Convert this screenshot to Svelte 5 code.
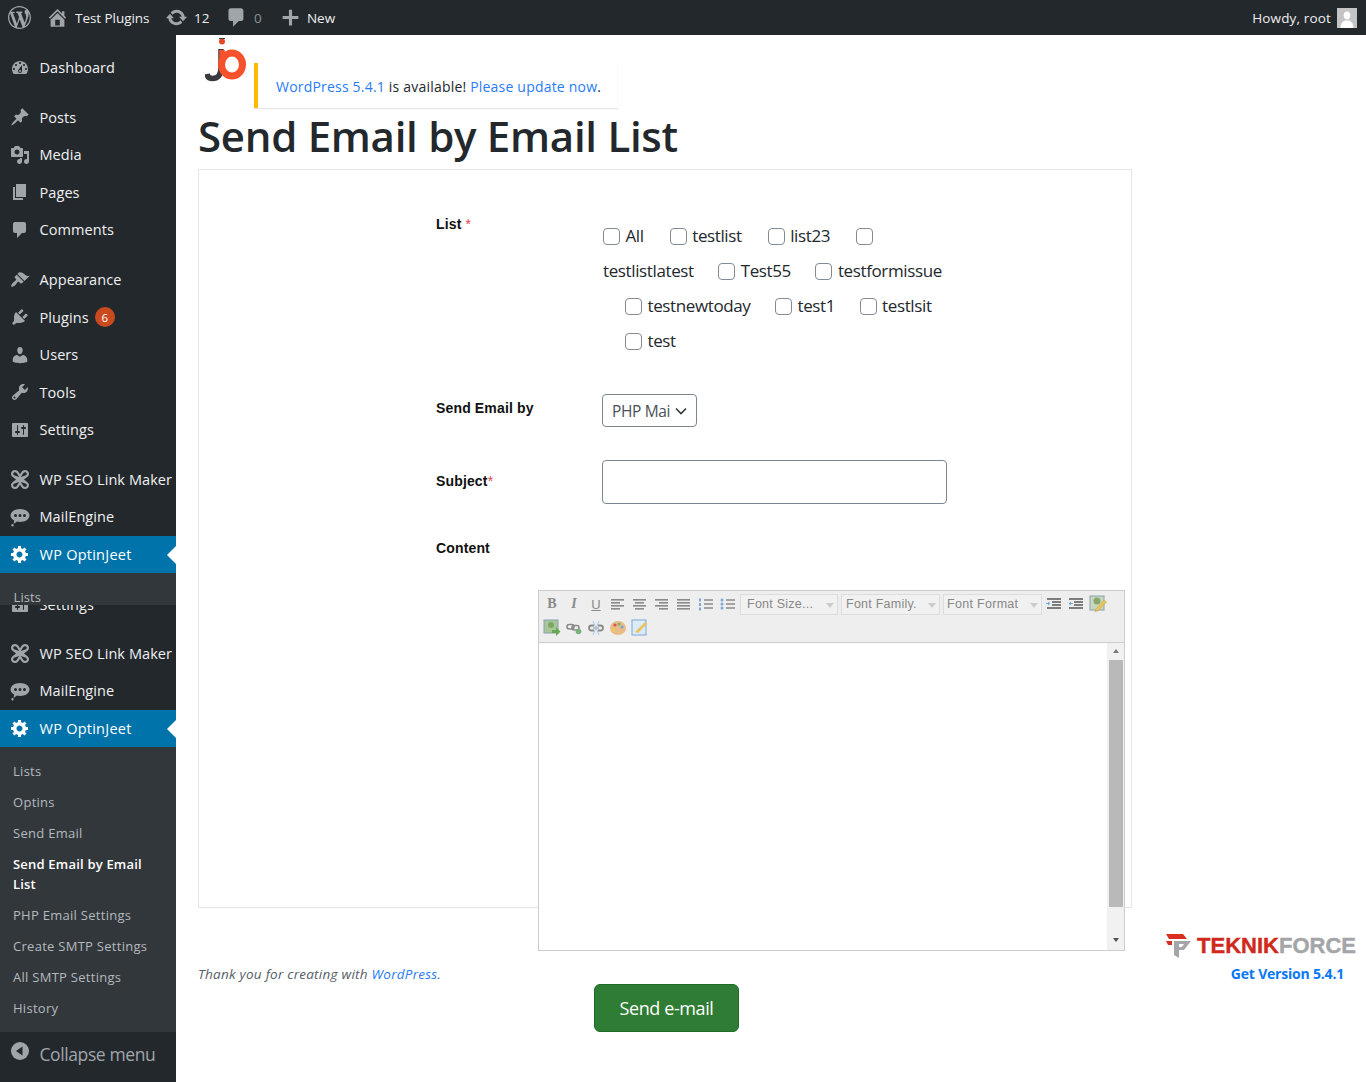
<script>
  const P = {
    dash: 'M3.76 16h12.48c1.1-1.37 1.76-3.11 1.76-5 0-4.42-3.58-8-8-8s-8 3.58-8 8c0 1.89.66 3.63 1.76 5zM10 4c.55 0 1 .45 1 1s-.45 1-1 1-1-.45-1-1 .45-1 1-1zM6 6c.55 0 1 .45 1 1s-.45 1-1 1-1-.45-1-1 .45-1 1-1zm8 0c.55 0 1 .45 1 1s-.45 1-1 1-1-.45-1-1 .45-1 1-1zm-5.37 5.55L12 7v6c0 1.1-.9 2-2 2s-2-.9-2-2c0-.57.24-1.08.63-1.45zM4 10c.55 0 1 .45 1 1s-.45 1-1 1-1-.45-1-1 .45-1 1-1zm12 0c.55 0 1 .45 1 1s-.45 1-1 1-1-.45-1-1 .45-1 1-1zm-5 3c0-.55-.45-1-1-1s-1 .45-1 1 .45 1 1 1 1-.45 1-1z',
    post: 'M10.44 3.02l1.82-1.82 6.36 6.35-1.83 1.82c-1.05-.68-2.48-.57-3.41.36l-.75.75c-.92.93-1.04 2.35-.35 3.41l-1.83 1.82-2.41-2.41-2.8 2.79c-.42.42-3.38 2.71-3.8 2.29s1.86-3.39 2.28-3.81l2.79-2.79L4.1 9.36l1.83-1.82c1.05.69 2.48.57 3.4-.36l.75-.75c.93-.92 1.05-2.35.36-3.41z',
    media: 'M13 11V4c0-.55-.45-1-1-1h-1.67L9 1H5L3.67 3H2c-.55 0-1 .45-1 1v7c0 .55.45 1 1 1h10c.55 0 1-.45 1-1zM7 4.5c1.38 0 2.5 1.12 2.5 2.5S8.38 9.5 7 9.5 4.5 8.38 4.5 7 5.62 4.5 7 4.5zM14 6h5v10.5c0 1.38-1.12 2.5-2.5 2.5S14 17.88 14 16.5s1.12-2.5 2.5-2.5c.17 0 .34.02.5.05V9h-3V6zm-4 8.05V13h2v3.5c0 1.38-1.12 2.5-2.5 2.5S7 17.88 7 16.5 8.12 14 9.5 14c.17 0 .34.02.5.05z',
    page: 'M6 15V2h10v13H6zm-1 1h8v2H3V5h2v11z',
    comment: 'M5 2h9c1.1 0 2 .9 2 2v7c0 1.1-.9 2-2 2h-2l-5 5v-5H5c-1.1 0-2-.9-2-2V4c0-1.1.9-2 2-2z',
    brush: 'M14.48 11.06L7.41 3.99l1.5-1.5c.5-.56 2.3-.47 3.51.32 1.21.8 1.43 1.28 2.91 2.1 1.18.64 2.45 1.26 4.45.85zm-.71.71L6.7 4.7 4.93 6.47c-.39.39-.39 1.02 0 1.41l1.06 1.06c.39.39.39 1.03 0 1.42-.6.6-1.43 1.11-2.21 1.69-.35.26-.7.53-1.01.84-1.34 1.34-1.99 3.17-1.37 3.79.49.49 2.45-.15 3.77-1.37.31-.3.59-.66.85-1.01.58-.78 1.09-1.61 1.69-2.21.39-.39 1.03-.39 1.42 0l1.06 1.06c.39.39 1.02.39 1.41 0z',
    plug: 'M13.11 4.36L9.87 7.6 8 5.73l3.24-3.24c.35-.34 1.05-.2 1.56.32.52.51.66 1.21.31 1.55zm-8 1.77l.91-1.12 9.01 9.01-1.19.84c-.71.71-2.63 1.16-3.82 1.16H6.14L4.9 17.26c-.59.59-1.54.59-2.12 0-.59-.58-.59-1.53 0-2.12l1.24-1.24v-3.88c0-1.13.4-3.19 1.09-3.89zm7.26 3.97l3.24-3.24c.34-.35 1.04-.21 1.55.31.52.51.66 1.21.31 1.55l-3.24 3.25z',
    user: 'M10 9.25c-2.27 0-2.73-3.44-2.73-3.44C7 4.02 7.82 2 9.97 2c2.16 0 2.98 2.02 2.71 3.81 0 0-.41 3.44-2.68 3.44zm0 2.57L12.72 10c2.39 0 4.52 2.33 4.52 4.53v2.49s-3.65 1.13-7.24 1.13c-3.65 0-7.24-1.13-7.24-1.13v-2.49c0-2.25 1.94-4.48 4.47-4.48z',
    tool: 'M16.68 9.77c-1.34 1.34-3.3 1.67-4.95.99l-5.41 6.52c-.99.99-2.59.99-3.58 0s-.99-2.59 0-3.57l6.52-5.42c-.68-1.65-.35-3.61.99-4.95 1.28-1.28 3.12-1.62 4.72-1.06l-2.89 2.89 2.82 2.82 2.86-2.87c.53 1.58.18 3.39-1.08 4.65zM3.81 16.21c.4.39 1.04.39 1.43 0 .4-.4.4-1.04 0-1.43-.39-.4-1.03-.4-1.43 0-.39.39-.39 1.03 0 1.43z',
    settings: 'M18 16V4c0-.55-.45-1-1-1H3c-.55 0-1 .45-1 1v12c0 .55.45 1 1 1h14c.55 0 1-.45 1-1zM8 11h1c.55 0 1 .45 1 1s-.45 1-1 1H8v1.5c0 .28-.22.5-.5.5s-.5-.22-.5-.5V13H6c-.55 0-1-.45-1-1s.45-1 1-1h1V5.5c0-.28.22-.5.5-.5s.5.22.5.5V11zm5-2h-1c-.55 0-1-.45-1-1s.45-1 1-1h1V5.5c0-.28.22-.5.5-.5s.5.22.5.5V7h1c.55 0 1 .45 1 1s-.45 1-1 1h-1v5.5c0 .28-.22.5-.5.5s-.5-.22-.5-.5V9z',
    seo: 'M5 1c-2.200 0-4 1.700-4 3.800 0 1.400.7 2.500 1.800 3.300L6 10.500l-3.200 2.400C1.700 13.700 1 14.800 1 16.200 1 18.300 2.800 20 5 20c1.500 0 2.600-.7 3.400-1.800L10 15.800l1.600 2.400c.8 1.100 1.900 1.800 3.400 1.800 2.200 0 4-1.700 4-3.800 0-1.400-.7-2.500-1.800-3.300L14 10.500l3.200-2.400C18.300 7.300 19 6.200 19 4.800 19 2.700 17.200 1 15 1c-1.500 0-2.600.7-3.400 1.800L10 5.200 8.400 2.800C7.600 1.700 6.500 1 5 1zm0 2.200c.7 0 1.200.3 1.600.9L9.200 8 4 6.300c-.5-.4-.8-.9-.8-1.500 0-.9.8-1.600 1.800-1.600zm10 0c1 0 1.800.7 1.800 1.600 0 .6-.3 1.100-.8 1.500L10.800 8l2.600-3.900c.4-.6.900-.9 1.600-.9zM9.200 13l-2.600 3.900c-.4.600-.9.900-1.600.900-1 0-1.800-.7-1.800-1.600 0-.6.3-1.100.8-1.500zm1.600 0l5.200 1.700c.5.4.8.9.8 1.500 0 .9-.8 1.600-1.800 1.600-.7 0-1.200-.3-1.600-.9z',
    mail: 'M10 2c5 0 9.500 2.800 9.500 6.500S15 15 10 15c-1 0-2-.1-3-.4L3.500 17l.7-3.600C2 12.200.5 10.500.5 8.500.5 4.800 5 2 10 2zM5.500 7a1.500 1.500 0 100 3 1.500 1.500 0 000-3zm4.500 0a1.500 1.500 0 100 3 1.500 1.500 0 000-3zm4.500 0a1.500 1.500 0 100 3 1.500 1.500 0 000-3zM2.500 17a1.200 1.200 0 100 2.400 1.200 1.200 0 000-2.400z',
    gear: 'M18 12h-2.18c-.17.7-.44 1.35-.81 1.93l1.54 1.54-2.1 2.1-1.54-1.54c-.58.36-1.23.63-1.91.79V19H8v-2.18c-.68-.16-1.33-.43-1.91-.79l-1.54 1.54-2.12-2.12 1.54-1.54c-.36-.58-.63-1.23-.79-1.91H1V9.03h2.17c.16-.7.44-1.35.8-1.94L2.43 5.55l2.1-2.1 1.54 1.54c.58-.37 1.24-.64 1.93-.81V2h3v2.18c.68.16 1.33.43 1.91.79l1.54-1.54 2.12 2.12-1.54 1.54c.36.59.64 1.24.8 1.94H18V12zm-8.500 1.500c1.660 0 3-1.340 3-3s-1.340-3-3-3-3 1.340-3 3 1.340 3 3 3z',
    wp: 'M20 10c0-5.520-4.480-10-10-10S0 4.480 0 10s4.480 10 10 10 10-4.480 10-10zM7.780 15.370L4.370 6.220c.550-.020 1.170-.080 1.170-.080.500-.060.440-1.130-.060-1.110 0 0-1.450.110-2.370.110-.180 0-.370 0-.580-.010C4.120 2.690 6.870 1.110 10 1.110c2.330 0 4.450.870 6.050 2.340-.680-.110-1.650.390-1.650 1.580 0 .740.450 1.360.900 2.100.350.610.550 1.360.550 2.460 0 1.490-1.400 5-1.400 5l-3.030-8.370c.540-.020.820-.170.820-.170.500-.050.440-1.250-.060-1.220 0 0-1.440.120-2.380.120-.870 0-2.330-.120-2.330-.120-.500-.030-.560 1.200-.060 1.220l.920.080 1.260 3.410zM17.410 10c.240-.640.740-1.870.430-4.250.700 1.290 1.050 2.710 1.050 4.250 0 3.290-1.730 6.240-4.400 7.780.970-2.590 1.940-5.200 2.920-7.780zM6.100 18.090C3.120 16.650 1.110 13.530 1.110 10c0-1.300.230-2.480.720-3.590C3.250 10.300 4.670 14.200 6.100 18.090zm4.030-6.630l2.580 6.980c-.860.290-1.760.450-2.710.450-.790 0-1.570-.110-2.290-.330.810-2.380 1.620-4.710 2.420-7.100z',
    home: 'M16 8.500l1.530 1.530-1.060 1.060L10 4.620l-6.470 6.470-1.060-1.060L10 2.500l4 4v-2h2v4zm-6-2.460l6 5.990V18H4v-5.970zM12 17v-5H8v5h4z',
    update: 'M10.200 3.280c3.530 0 6.430 2.610 6.920 6h2.080l-3.500 4-3.500-4h2.320c-.450-1.970-2.210-3.450-4.320-3.450-1.450 0-2.730.710-3.540 1.780L4.950 5.660C6.230 4.200 8.110 3.280 10.200 3.280zm-.400 13.440c-3.520 0-6.430-2.610-6.920-6H.800l3.500-4c1.170 1.330 2.330 2.670 3.500 4H5.480c.450 1.970 2.210 3.450 4.320 3.450 1.450 0 2.730-.710 3.540-1.780l1.710 1.950c-1.280 1.460-3.150 2.380-5.250 2.380z',
    plus: 'M8.500 2.500h3v6h6v3h-6v6h-3v-6h-6v-3h6z'
  };
  const groupA = [
    { k: 'post', t: 'Posts' }, { k: 'media', t: 'Media' }, { k: 'page', t: 'Pages' }, { k: 'comment', t: 'Comments' }
  ];
  const groupB = [
    { k: 'brush', t: 'Appearance' }, { k: 'plug', t: 'Plugins', badge: '6' }, { k: 'user', t: 'Users' }, { k: 'tool', t: 'Tools' }, { k: 'settings', t: 'Settings' }
  ];
  const groupC = [{ k: 'seo', t: 'WP SEO Link Maker' }, { k: 'mail', t: 'MailEngine' }];
  const sub = ['Lists', 'Optins', 'Send Email'];
  const sub2 = ['PHP Email Settings', 'Create SMTP Settings', 'All SMTP Settings', 'History'];
  const lines = [
    { items: ['All', 'testlist', 'list23', ''], cls: 'wide' },
    { plain: 'testlistlatest', items: ['Test55', 'testformissue'], cls: '' },
    { items: ['testnewtoday', 'test1', 'testlsit'], cls: 'in' },
    { items: ['test'], cls: 'in' }
  ];
</script>

{#snippet icon(k, cls = '')}
  <svg class={'ic ' + cls} viewBox="0 0 20 20" aria-hidden="true"><path d={P[k]} /></svg>
{/snippet}

{#snippet row(it)}
  <div class="mi">
    {@render icon(it.k)}
    <span>{it.t}</span>
    {#if it.badge}<b class="badge">{it.badge}</b>{/if}
  </div>
{/snippet}

{#snippet active()}
  <div class="mi cur">
    {@render icon('gear', 'white')}
    <span>WP OptinJeet</span>
    <i class="notch"></i>
  </div>
{/snippet}

{#snippet lines3(w)}
  <svg class="tb" viewBox="0 0 16 14" aria-hidden="true">
    {#each [2, 5, 8, 11] as y, i}
      <rect x={w[i][0]} {y} width={w[i][1]} height="1.600" fill="#8a8a8a" />
    {/each}
  </svg>
{/snippet}

<div class="page">
  <header class="bar">
    <svg class="wp" viewBox="0 0 20 20" aria-hidden="true"><path d={P.wp} /></svg>
    {@render icon('home', 'home')}<span class="site">Test Plugins</span>
    {@render icon('update', 'upd')}<span class="n12">12</span>
    {@render icon('comment', 'cm')}<span class="n0">0</span>
    {@render icon('plus', 'pl')}<span class="new">New</span>
    <span class="howdy">Howdy, root</span>
    <span class="avatar"><svg viewBox="0 0 20 20" aria-hidden="true"><rect width="20" height="20" fill="#c4c4c4" /><path d="M10 3.500c2.200 0 3.300 1.800 3.300 3.900 0 2-1.300 4-3.300 4s-3.300-2-3.300-4c0-2.100 1.100-3.900 3.300-3.900zM3.500 20c0-4.500 2.500-7 4.500-7.500h4c2 .5 4.500 3 4.500 7.500z" fill="#fff" /></svg></span>
  </header>

  <div class="body">
    <nav class="side">
      <div class="mi first">{@render icon('dash')}<span>Dashboard</span></div>
      <div class="grp">{#each groupA as it}{@render row(it)}{/each}</div>
      <div class="grp">{#each groupB as it}{@render row(it)}{/each}</div>
      <div class="grp">{#each groupC as it}{@render row(it)}{/each}</div>
      {@render active()}
      <div class="over"><a href="#l">Lists</a></div>
      <div class="under">{@render row({ k: 'settings', t: 'Settings' })}</div>
      <div class="grp g2">{#each groupC as it}{@render row(it)}{/each}</div>
      {@render active()}
      <div class="subm">
        {#each sub as s}<a href="#s">{s}</a>{/each}
        <a href="#s" class="on">Send Email by Email List</a>
        {#each sub2 as s}<a href="#s">{s}</a>{/each}
      </div>
      <div class="collapse">
        <svg viewBox="0 0 20 20" aria-hidden="true"><circle cx="10" cy="10" r="9" fill="#a0a5aa" /><path d="M12.500 5.500v9L6 10z" fill="#23282d" /></svg>
        <span>Collapse menu</span>
      </div>
    </nav>

    <main class="main">
      <div class="topline">
        <svg class="jb" viewBox="0 0 41 46" aria-hidden="true">
          <path d="M16 11v19c0 7-3.500 10.500-8.500 10.500-3 0-5-1.500-5.500-4.500" fill="none" stroke="#3b3a3c" stroke-width="5.500" />
          <circle cx="17" cy="3.500" r="3" fill="#e8482a" />
          <path d="M14 .9a3 3 0 016 0z" fill="#3b3a3c" />
          <ellipse cx="27" cy="26.500" rx="10.500" ry="11.500" fill="none" stroke="#f4512c" stroke-width="7" />
          <path d="M17 12v15" stroke="#f4512c" stroke-width="5.500" />
        </svg>
        <div class="notice"><a href="#u">WordPress 5.4.1</a> is available! <a href="#u">Please update now</a>.</div>
      </div>
      <h1>Send Email by Email List</h1>

      <section class="card">
        <div class="frow r-list">
          <div class="lab">List <em>*</em></div>
          <div class="checks">
            {#each lines as l}
              <div class={'cl ' + l.cls}>
                {#if l.plain}<span class="plain">{l.plain}</span>{/if}
                {#each l.items as t}
                  <label class="ck"><span class="box"></span>{#if t}<span>{t}</span>{/if}</label>
                {/each}
              </div>
            {/each}
          </div>
        </div>
        <div class="frow r-send">
          <div class="lab">Send Email by</div>
          <div class="sel">PHP Mai<svg viewBox="0 0 12 8" aria-hidden="true"><path d="M1 1.500l5 5 5-5" fill="none" stroke="#343a40" stroke-width="1.600" /></svg></div>
        </div>
        <div class="frow r-sub">
          <div class="lab">Subject<em>*</em></div>
          <div class="inp"></div>
        </div>
        <div class="frow r-con"><div class="lab">Content</div></div>

        <div class="editor">
          <div class="tools">
            <div class="trow">
              <span class="tbt bb">B</span><span class="tbt ii">I</span><span class="tbt uu">U</span>
              <span class="tbt">{@render lines3([[1, 13], [1, 9], [1, 13], [1, 9]])}</span>
              <span class="tbt">{@render lines3([[1, 13], [3, 9], [1, 13], [3, 9]])}</span>
              <span class="tbt">{@render lines3([[1, 13], [5, 9], [1, 13], [5, 9]])}</span>
              <span class="tbt">{@render lines3([[1, 13], [1, 13], [1, 13], [1, 13]])}</span>
              <span class="tbt"><svg class="tb" viewBox="0 0 16 14" aria-hidden="true"><path d="M6 3h9M6 7h9M6 11h9" stroke="#8a8a8a" stroke-width="1.400" /><path d="M1 1.500h2v3H1zM1 6h2v3H1zM1 10.500h2v3H1z" fill="#7fa6d8" /></svg></span>
              <span class="tbt"><svg class="tb" viewBox="0 0 16 14" aria-hidden="true"><path d="M6 3h9M6 7h9M6 11h9" stroke="#8a8a8a" stroke-width="1.400" /><circle cx="2" cy="3" r="1.500" fill="#7fa6d8" /><circle cx="2" cy="7" r="1.500" fill="#7fa6d8" /><circle cx="2" cy="11" r="1.500" fill="#7fa6d8" /></svg></span>
              <span class="tsel s1">Font Size...<i></i></span>
              <span class="tsel s2">Font Family.<i></i></span>
              <span class="tsel s3">Font Format<i></i></span>
              <span class="tbt"><svg class="tb" viewBox="0 0 16 14" aria-hidden="true"><path d="M1 2h14M6 5h9M6 8h9M1 11h14" stroke="#7d7d7d" stroke-width="1.800" /><path d="M0 6.500h3M2 5l2 1.500L2 8" stroke="#6fa8dc" fill="none" /></svg></span>
              <span class="tbt"><svg class="tb" viewBox="0 0 16 14" aria-hidden="true"><path d="M1 2h14M6 5h9M6 8h9M1 11h14" stroke="#7d7d7d" stroke-width="1.800" /><path d="M5 6.500H1M3 5L1 6.500 3 8" stroke="#6fa8dc" fill="none" /></svg></span>
              <span class="tbt"><svg class="tb big" viewBox="0 0 18 18" aria-hidden="true"><rect x="1" y="1" width="14" height="14" fill="#c8d8c0" stroke="#8aa0b0" /><circle cx="8" cy="6" r="3.500" fill="#86a86a" /><path d="M6 17l1-3 8-9 2.500 2-8 8.500z" fill="#e9c45c" stroke="#c9a24a" stroke-width=".5" /></svg></span>
            </div>
            <div class="trow">
              <span class="tbt"><svg class="tb big" viewBox="0 0 18 18" aria-hidden="true"><rect x="1" y="1" width="14" height="13" fill="#a7c79a" stroke="#8aa0b0" /><circle cx="8" cy="6" r="3" fill="#7da667" /><path d="M9 11h4V8l4.500 4.500L13 17v-3H9z" fill="#6aa84f" /></svg></span>
              <span class="tbt"><svg class="tb" viewBox="0 0 16 14" aria-hidden="true"><rect x="1" y="3.500" width="7" height="4.500" rx="2.200" fill="none" stroke="#8a8a8a" stroke-width="1.600" /><rect x="6" y="4.500" width="7" height="4.500" rx="2.200" fill="none" stroke="#8a8a8a" stroke-width="1.600" /><circle cx="12.500" cy="10.500" r="2.800" fill="#7ab07a" /></svg></span>
              <span class="tbt"><svg class="tb" viewBox="0 0 16 14" aria-hidden="true"><path d="M6 4.500H3.500a2.500 2.500 0 000 5H6M10 4.500h2.500a2.500 2.500 0 010 5H10" fill="none" stroke="#8a8a8a" stroke-width="1.800" /><path d="M5 6.500h6v1H5z" fill="#8a8a8a" /><path d="M5 0l6 14M11 0L5 14" stroke="#a9c4e6" /></svg></span>
              <span class="tbt"><svg class="tb big" viewBox="0 0 18 18" aria-hidden="true"><ellipse cx="9" cy="9" rx="8" ry="7" fill="#e9bc84" /><circle cx="6" cy="6" r="1.600" fill="#d9534f" /><circle cx="10" cy="5" r="1.600" fill="#7ab07a" /><circle cx="13" cy="8" r="1.600" fill="#6fa8dc" /><circle cx="5" cy="11" r="1.600" fill="#e6d05c" /></svg></span>
              <span class="tbt"><svg class="tb big" viewBox="0 0 18 18" aria-hidden="true"><rect x="1" y="1" width="14" height="15" fill="#dcebf8" stroke="#7fa6d8" /><path d="M4 13l10-10 2 2-9 9z" fill="#e9c45c" /></svg></span>
            </div>
          </div>
          <div class="area">
            <div class="scroll">
              <i class="up"></i>
              <div class="thumb"></div>
              <i class="down"></i>
            </div>
          </div>
        </div>
        <button class="send" type="button">Send e-mail</button>
      </section>

      <footer class="foot">
        <p>Thank you for creating with <a href="#w">WordPress</a>.</p>
        <div class="brand">
          <div class="tf">
            <svg viewBox="0 0 25 25" aria-hidden="true"><path d="M0 1h17l4 5H3z" fill="#d92f20" /><path d="M0 8h6v4l-4-0z" fill="#d92f20" /><path d="M8 8h17l-7 9h-5v8l-5-3z" fill="#a3a5a8" /><path d="M13 11h5l-2 3h-3z" fill="#fff" /></svg>
            <span class="r">TEKNIK</span><span class="g">FORCE</span>
          </div>
          <a href="#v">Get Version 5.4.1</a>
        </div>
      </footer>
    </main>
  </div>
</div>

<style>
  :global(body) { margin: 0; background: #fff; }
  .page { width: 1366px; height: 1082px; overflow: hidden; font-family: "Open Sans", "Noto Sans", sans-serif; color: #23282d; }
  .bar { height: 35px; background: #23282d; display: flex; align-items: center; color: #eee; font-size: 13.500px; letter-spacing: -.05px; }
  .bar .ic { fill: #a0a5aa; }
  .wp { width: 23px; height: 23px; margin-left: 8px; fill: #a0a5aa; }
  .bar .home { width: 23px; height: 23px; margin-left: 15px; }
  .site { margin-left: 6px; width: 75px; white-space: nowrap; }
  .bar .upd { width: 23px; height: 23px; margin-left: 15px; }
  .n12 { margin-left: 6px; width: 15px; }
  .bar .cm { width: 23px; height: 23px; margin-left: 16px; }
  .n0 { margin-left: 6px; color: #8a8f94; width: 8px; }
  .bar .pl { width: 21px; height: 21px; margin-left: 18px; }
  .new { margin-left: 6px; }
  .howdy { margin-left: auto; margin-right: 6px; letter-spacing: .15px; }
  .avatar { width: 20px; height: 20px; margin-right: 9px; border: 0; display: block; }
  .avatar svg { display: block; width: 20px; height: 20px; }

  .body { display: flex; height: 1047px; }
  .side { width: 176px; flex: none; background: #23282d; color: #eee; display: flex; flex-direction: column; position: relative; }
  .mi { height: 37.500px; display: flex; align-items: center; font-size: 14.500px; letter-spacing: .08px; white-space: nowrap; position: relative; }
  .mi .ic { width: 20px; height: 20px; margin-left: 9.500px; margin-right: 10px; fill: #a0a5aa; flex: none; }
  .mi span { color: #f0f0f1; }
  .first { margin-top: 14px; }
  .grp { margin-top: 12.200px; }
  .badge { margin-left: 6px; width: 20px; height: 20px; border-radius: 50%; background: #ca4a1f; color: #fff; font-size: 11.500px; font-weight: 400; display: flex; align-items: center; justify-content: center; letter-spacing: 0; }
  .cur { background: #0073aa; }
  .cur .ic.white { fill: #fff; }
  .cur span { color: #fff; letter-spacing: .25px; }
  .notch { position: absolute; right: 0; top: 10px; width: 0; height: 0; border: 9px solid transparent; border-left: 0; border-right-color: #fff; }
  .over { height: 32px; background: #32373c; position: relative; z-index: 2; display: flex; align-items: flex-end; box-sizing: border-box; }
  .over a { color: #b4b9be; text-decoration: none; font-size: 13px; letter-spacing: .1px; padding-left: 13.500px; line-height: 16px; }
  .under { margin-top: -19px; height: 37px; }
  .g2 { margin-top: 11.500px; }
  .subm { background: #32373c; display: flex; flex-direction: column; height: 284.500px; box-sizing: border-box; padding-top: 8px; }
  .subm a { color: #b4b9be; text-decoration: none; font-size: 13px; letter-spacing: .28px; line-height: 20px; padding: 5.500px 20px 5.500px 13px; }
  .subm a.on { color: #fff; font-weight: 600; letter-spacing: .2px; }
  .collapse { display: flex; align-items: center; color: #a0a5aa; font-size: 17.500px; letter-spacing: -.4px; height: 50px; flex: none; padding-bottom: 5px; box-sizing: border-box; }
  .collapse svg { width: 20px; height: 20px; margin-left: 10px; margin-right: 9.500px; position: relative; top: -3px; }

  .main { flex: 1; padding-left: 22px; min-width: 0; }
  .topline { display: flex; align-items: flex-start; height: 73px; }
  .jb { width: 41px; height: 46px; margin: 3px 8px 0 7px; flex: none; }
  .notice { margin-top: 28px; box-sizing: border-box; width: 364px; height: 45px; border-left: 4px solid #ffb900; background: #fff; box-shadow: 0 1px 1px rgba(0,0,0,.1); padding: 13.500px 0 0 18px; font-size: 14px; letter-spacing: .2px; line-height: 20px; color: #23282d; white-space: nowrap; }
  a { color: #007bff; text-decoration: none; }
  .notice a { color: #2a7bf6; }
  h1 { margin: 0; font-size: 42px; font-weight: 600; line-height: 56px; height: 61px; color: #23282d; letter-spacing: -.28px; white-space: nowrap; }
  .card { box-sizing: border-box; width: 934px; height: 739px; border: 1px solid #e5e5ea; padding: 0 0 0 237px; background: #fff; }
  .frow { display: flex; }
  .lab { width: 166px; flex: none; font-family: "Liberation Sans", Arial, sans-serif; font-weight: 700; font-size: 14px; letter-spacing: .15px; color: #111; line-height: 16px; white-space: nowrap; }
  .lab em { color: #e2423f; font-style: normal; font-weight: 400; }
  .r-list { margin-top: 46px; height: 178px; }
  .checks { font-size: 17px; letter-spacing: -.38px; color: #23282d; margin-top: 2px; margin-left: 1px; }
  .cl { display: flex; height: 35px; align-items: center; white-space: nowrap; gap: 24.500px; }
  .cl.wide { gap: 26px; }
  .cl.in { padding-left: 22px; }
  .ck { display: flex; align-items: center; }
  .box { box-sizing: border-box; width: 17px; height: 17px; border: 1px solid #828b95; border-radius: 4px; background: #fff; margin-right: 5.500px; position: relative; top: 1px; }
  .r-send { height: 66px; }
  .r-send .lab { margin-top: 6px; }
  .sel { box-sizing: border-box; width: 95px; height: 33px; border: 1px solid #7a8793; border-radius: 4px; padding: 1px 0 0 9px; font-size: 15.500px; letter-spacing: -.35px; color: #495057; display: flex; align-items: center; white-space: nowrap; }
  .sel svg { width: 12px; height: 8px; margin-left: 5px; }
  .r-sub { height: 80px; }
  .r-sub .lab { margin-top: 13px; }
  .inp { box-sizing: border-box; width: 345px; height: 44px; border: 1px solid #7a8793; border-radius: 4px; }
  .r-con { height: 50px; }
  .editor { box-sizing: border-box; margin-left: 102px; width: 587px; height: 361px; border: 1px solid #ccc; background: #fff; display: flex; flex-direction: column; }
  .tools { background: #eee; border-bottom: 1px solid #ccc; flex: none; padding: 1px 0 0 2px; height: 50px; }
  .trow { display: flex; align-items: center; height: 24px; }
  .tbt { width: 22px; height: 24px; display: flex; align-items: center; justify-content: center; flex: none; font-family: "Liberation Serif", serif; font-size: 14px; color: #8a8a8a; }
  .bb { font-weight: 700; }
  .ii { font-style: italic; font-weight: 700; }
  .uu { text-decoration: underline; font-family: "Liberation Sans", sans-serif; font-size: 13px; }
  .tb { width: 16px; height: 14px; }
  .tb.big { width: 18px; height: 18px; }
  .tsel { box-sizing: border-box; height: 21px; background: #f1f1f1; border: 1px solid #ddd; font-family: "Liberation Sans", sans-serif; font-size: 12.500px; letter-spacing: .25px; color: #888; display: flex; align-items: center; padding-left: 5px; position: relative; white-space: nowrap; }
  .tsel i { position: absolute; right: 3px; top: 8px; border: 4.500px solid transparent; border-top: 5px solid #ccc; border-bottom: 0; }
  .s1 { width: 98px; margin-left: 1px; margin-right: 3px; padding-left: 6px; }
  .s2 { width: 99px; margin-right: 3px; padding-left: 4px; }
  .s3 { width: 99px; margin-right: 1px; padding-left: 3px; letter-spacing: .3px; }
  .area { flex: 1; position: relative; display: flex; justify-content: flex-end; min-height: 0; }
  .scroll { width: 17px; background: #f1f1f1; display: flex; flex-direction: column; align-items: center; }
  .thumb { width: 14px; height: 247px; background: #b9b9b9; }
  .up, .down { width: 0; height: 0; border: 3.500px solid transparent; }
  .up { border-top: 0; border-bottom: 4px solid #777; margin: 6px 0 7px; }
  .down { border-bottom: 0; border-top: 4px solid #505050; margin-top: 31px; }
  .send { display: block; margin: 33px 0 0 158px; width: 145px; height: 48px; border-radius: 6px; border: 1px solid #1f6b26; background: #2f7d34; color: #fff; font-family: inherit; font-size: 18px; letter-spacing: -.4px; position: relative; z-index: 3; padding: 0; }
  .foot { display: flex; justify-content: space-between; align-items: flex-start; margin-top: 25px; padding-right: 10px; }
  .foot p { margin: 32px 0 0; font-size: 13.500px; font-style: italic; letter-spacing: .25px; color: #555d66; line-height: 18px; }
  .foot p a { color: #2a7bf6; }
  .brand { display: flex; flex-direction: column; align-items: flex-end; }
  .tf { display: flex; align-items: center; height: 25px; font-family: "Liberation Sans", sans-serif; font-weight: 700; font-size: 22px; -webkit-text-stroke: .4px; }
  .tf svg { width: 25px; height: 25px; margin-right: 6px; }
  .r { color: #d0291c; }
  .g { color: #a3a5a8; }
  .brand a { margin-top: 6px; margin-right: 12px; font-family: "Open Sans", sans-serif; font-weight: 700; font-size: 14px; letter-spacing: -.2px; line-height: 20px; color: #0a78f5; }
</style>
